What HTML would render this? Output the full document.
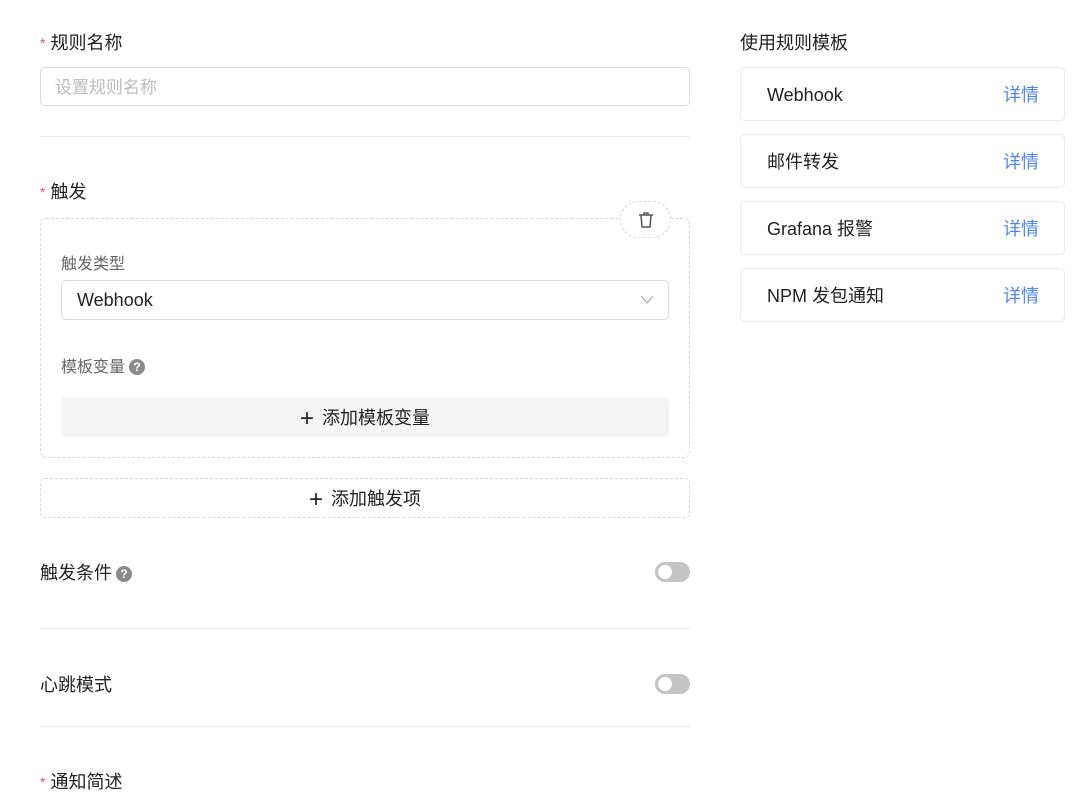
<!DOCTYPE html><html><head><meta charset="utf-8"><style>
*{box-sizing:border-box;margin:0;padding:0}
body{width:1083px;height:799px;background:#fff;font-family:"Liberation Sans","Noto Sans CJK SC",sans-serif;color:#222;position:relative;overflow:hidden}
.a{position:absolute}
.lbl{font-size:18px;line-height:20px}
.req{color:#f5555d;font-size:14px;margin-right:5px;vertical-align:top}
.div{height:1px;background:#ececec;left:40px;width:650px}
.q{display:inline-block;width:16px;height:16px;border-radius:50%;background:#8a8a8a;color:#fff;font-size:12px;line-height:16px;text-align:center;font-weight:bold;vertical-align:1px;margin-left:4px}
.tog{width:35px;height:20px;border-radius:10px;background:#c4c4c4}
.tog:after{content:"";position:absolute;left:3px;top:3px;width:14px;height:14px;border-radius:50%;background:#fff}
.card{left:740px;width:325px;height:54px;border:1px solid #ececec;border-radius:5px;font-size:18px;line-height:54px;padding-left:26px}
.card span{position:absolute;right:25px;color:#4d86f5}
</style></head><body>
<div class="a lbl" style="left:40px;top:33px"><span class="req">*</span>规则名称</div>
<div class="a" style="left:40px;top:67px;width:650px;height:39px;border:1px solid #d9d9d9;border-radius:5px;font-size:17px;color:#bbb;line-height:40px;padding-left:14px">设置规则名称</div>
<div class="a div" style="top:136px"></div>
<div class="a lbl" style="left:40px;top:182px"><span class="req">*</span>触发</div>
<div class="a" style="left:40px;top:218px;width:650px;height:240px;border:1px dashed #d9d9d9;border-radius:6px"></div>
<div class="a" style="left:620px;top:201px;width:51px;height:37px;border:1px dashed #d9d9d9;border-radius:19px;background:#fff">
<svg class="a" style="left:16px;top:9px" width="18" height="18" viewBox="0 0 18 18" fill="none" stroke="#555" stroke-width="1.5"><path d="M2 4h14M7 4V2h4v2M4 4l1 12h8l1-12"/></svg></div>
<div class="a" style="left:61px;top:250px;font-size:16px;color:#666">触发类型</div>
<div class="a" style="left:61px;top:280px;width:608px;height:40px;border:1px solid #d9d9d9;border-radius:5px;font-size:18px;line-height:38px;padding-left:15px">Webhook
<svg class="a" style="right:14px;top:14px" width="14" height="9" viewBox="0 0 14 9" fill="none" stroke="#aaa" stroke-width="1.2"><path d="M1 1l6 7 6-7"/></svg></div>
<div class="a" style="left:61px;top:353px;font-size:16px;color:#666">模板变量<span class="q">?</span></div>
<div class="a" style="left:61px;top:397px;width:608px;height:40px;background:#f5f5f5;border-radius:5px;text-align:center;font-size:18px;line-height:43px"><span style="font-size:24px;vertical-align:-2px;margin-right:8px">+</span>添加模板变量</div>
<div class="a" style="left:40px;top:478px;width:650px;height:40px;border:1px dashed #d9d9d9;border-radius:5px;text-align:center;font-size:18px;line-height:41px"><span style="font-size:24px;vertical-align:-2px;margin-right:8px">+</span>添加触发项</div>
<div class="a lbl" style="left:40px;top:563px">触发条件<span class="q">?</span></div>
<div class="a tog" style="left:655px;top:562px"></div>
<div class="a div" style="top:628px"></div>
<div class="a lbl" style="left:40px;top:675px">心跳模式</div>
<div class="a tog" style="left:655px;top:674px"></div>
<div class="a div" style="top:726px"></div>
<div class="a lbl" style="left:40px;top:772px"><span class="req">*</span>通知简述</div>
<div class="a lbl" style="left:740px;top:33px">使用规则模板</div>
<div class="a card" style="top:67px">Webhook<span>详情</span></div>
<div class="a card" style="top:134px">邮件转发<span>详情</span></div>
<div class="a card" style="top:201px">Grafana 报警<span>详情</span></div>
<div class="a card" style="top:268px">NPM 发包通知<span>详情</span></div>
</body></html>
